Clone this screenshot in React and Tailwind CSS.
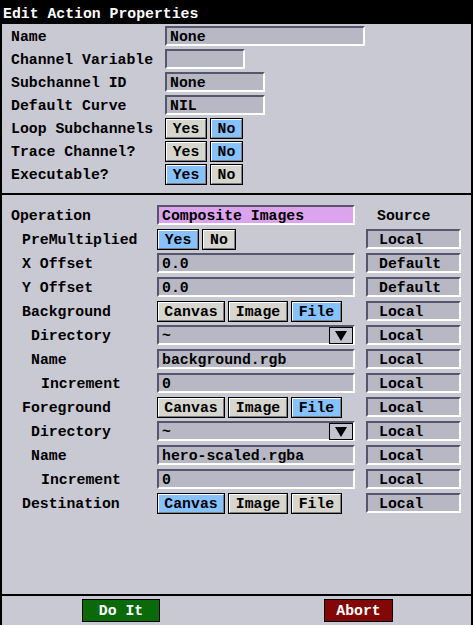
import React from 'react';

// Sunken text field with dark top/left edge and light bottom/right edge
const Field = ({ value = '', width, pink = false, dropdown = false, inset = 'pl-[3px]' }) => (
    <div
        className={`relative h-[20px] flex items-center border-2 border-t-[#55556b] border-l-[#55556b] border-b-white border-r-white ${pink ? 'bg-[#dca4ee]' : 'bg-[#b8b8c4]'} ${inset}`}
        style={{ width }}
    >
        <span className="leading-none pt-[2px]">{value}</span>
        {dropdown && (
            <div className="absolute right-[0px] top-[0px] h-[17px] w-[24px] border border-black bg-[#c4c4d0] flex items-center justify-center">
                <svg width="12" height="10" viewBox="0 0 12 10">
                    <polygon points="0,0 12,0 6,10" fill="black" />
                </svg>
            </div>
        )}
    </div>
);

// Raised toggle button
const Btn = ({ label, width, on = false }) => (
    <div
        className={`h-[21px] border border-black flex items-center justify-center ${on ? 'bg-[#86c2ff]' : 'bg-[#d6d6ce]'}`}
        style={{ width }}
    >
        <div className="w-full h-full flex items-center justify-center border border-t-white border-l-white border-b-[#7c7c84] border-r-[#7c7c84] leading-none pt-[3px]">
            {label}
        </div>
    </div>
);

const Toggle = ({ options, selected }) => (
    <div className="flex gap-[3px]">
        {options.map(([label, w]) => (
            <Btn key={label} label={label} width={w} on={label === selected} />
        ))}
    </div>
);

const topRows = [
    { label: 'Name', el: <Field value="None" width={200} /> },
    { label: 'Channel Variable', el: <Field width={80} /> },
    { label: 'Subchannel ID', el: <Field value="None" width={100} /> },
    { label: 'Default Curve', el: <Field value="NIL" width={100} /> },
    { label: 'Loop Subchannels', el: <Toggle options={[['Yes', 42], ['No', 33]]} selected="No" /> },
    { label: 'Trace Channel?', el: <Toggle options={[['Yes', 42], ['No', 33]]} selected="No" /> },
    { label: 'Executable?', el: <Toggle options={[['Yes', 42], ['No', 33]]} selected="Yes" /> },
];

const srcOpts = [['Canvas', 68], ['Image', 60], ['File', 51]];

const opRows = [
    { label: 'PreMultiplied', indent: 22, el: <Toggle options={[['Yes', 42], ['No', 34]]} selected="Yes" />, src: 'Local' },
    { label: 'X Offset', indent: 22, el: <Field value="0.0" width={198} />, src: 'Default' },
    { label: 'Y Offset', indent: 22, el: <Field value="0.0" width={198} />, src: 'Default' },
    { label: 'Background', indent: 22, el: <Toggle options={srcOpts} selected="File" />, src: 'Local' },
    { label: 'Directory', indent: 31, el: <Field value="~" width={198} dropdown />, src: 'Local' },
    { label: 'Name', indent: 31, el: <Field value="background.rgb" width={198} />, src: 'Local' },
    { label: 'Increment', indent: 41, el: <Field value="0" width={198} />, src: 'Local' },
    { label: 'Foreground', indent: 22, el: <Toggle options={srcOpts} selected="File" />, src: 'Local' },
    { label: 'Directory', indent: 31, el: <Field value="~" width={198} dropdown />, src: 'Local' },
    { label: 'Name', indent: 31, el: <Field value="hero-scaled.rgba" width={198} />, src: 'Local' },
    { label: 'Increment', indent: 41, el: <Field value="0" width={198} />, src: 'Local' },
    { label: 'Destination', indent: 22, el: <Toggle options={srcOpts} selected="Canvas" />, src: 'Local' },
];

export default function App() {
    return (
        <div
            className="w-[473px] h-[625px] flex flex-col bg-[#c9c9d3] text-black font-bold text-[14.8px] overflow-hidden"
            style={{ fontFamily: '"Liberation Mono", "DejaVu Sans Mono", monospace' }}
        >
            {/* Title bar */}
            <div className="h-[24px] bg-black text-white flex items-center pl-[3px] pt-[5px] shrink-0 leading-none">
                Edit Action Properties
            </div>

            <div className="flex-1 flex flex-col border-l-2 border-r-2 border-black">
                {/* Channel section */}
                <div className="flex flex-col gap-[3px] pt-[2px] pb-[9px]">
                    {topRows.map((r) => (
                        <div key={r.label} className="flex items-center h-[20px]">
                            <div className="w-[163px] pl-[9px] leading-none pt-[3px]">{r.label}</div>
                            {r.el}
                        </div>
                    ))}
                </div>

                <div className="h-[2px] bg-black" />

                {/* Operation section */}
                <div className="flex-1 flex flex-col gap-[4px] pt-[10px]">
                    <div className="flex items-center h-[20px]">
                        <div className="w-[155px] pl-[9px] leading-none pt-[3px]">Operation</div>
                        <Field value="Composite Images" width={198} pink />
                        <div className="pl-[22px] leading-none pt-[3px]">Source</div>
                    </div>
                    {opRows.map((r, i) => (
                        <div key={i} className="flex items-center h-[20px]">
                            <div className="w-[155px] leading-none pt-[3px]" style={{ paddingLeft: r.indent - 2 }}>{r.label}</div>
                            <div className="w-[209px]">{r.el}</div>
                            <Field value={r.src} width={95} inset="pl-[11px]" />
                        </div>
                    ))}
                </div>

                <div className="h-[2px] bg-black" />

                {/* Action buttons */}
                <div className="h-[29px] flex items-center">
                    <div className="w-[78px] h-[23px] ml-[80px] border border-black bg-[#0a6a0a] text-white flex items-center justify-center leading-none pt-[2px]">
                        Do It
                    </div>
                    <div className="w-[69px] h-[23px] ml-[164px] border border-black bg-[#820808] text-white flex items-center justify-center leading-none pt-[2px]">
                        Abort
                    </div>
                </div>
            </div>
        </div>
    );
}
